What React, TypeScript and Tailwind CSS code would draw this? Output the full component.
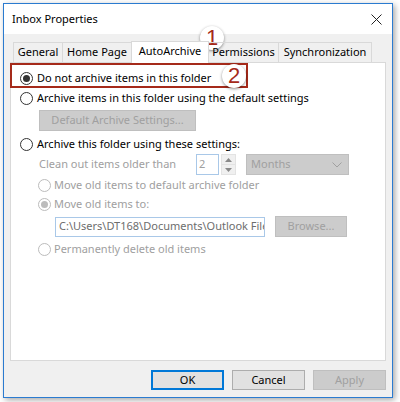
import React from "react";

type RadioProps = {
  checked?: boolean;
  disabled?: boolean;
};

function Radio({ checked = false, disabled = false }: RadioProps) {
  return (
    <span
      className={
        "flex h-[13px] w-[13px] shrink-0 items-center justify-center rounded-full border bg-white " +
        (disabled ? "border-[#bcbcbc]" : "border-[#333333]")
      }
    >
      {checked && (
        <span
          className={
            "h-[7px] w-[7px] rounded-full " + (disabled ? "bg-[#bcbcbc]" : "bg-[#333333]")
          }
        />
      )}
    </span>
  );
}

function Badge({ n }: { n: string }) {
  return (
    <span
      className="flex h-[24px] w-[24px] items-center justify-center rounded-full bg-white text-[22px] leading-none text-[#a52a1a] shadow-[0_1px_3px_rgba(0,0,0,0.45)]"
      style={{ fontFamily: '"Liberation Sans", Arial, sans-serif' }}
    >
      {n}
    </span>
  );
}

const tabs = [
  { label: "General", w: "w-[50px]" },
  { label: "Home Page", w: "w-[70px]" },
];
const tabsRight = [
  { label: "Permissions", w: "w-[71px]" },
  { label: "Synchronization", w: "w-[94px]" },
];

export default function App() {
  return (
    <div
      className="relative h-[402px] w-[400px] bg-white pl-[3px] pt-[3px] text-[11px] text-black"
      style={{ fontFamily: '"Noto Sans", "Liberation Sans", sans-serif' }}
    >
      <div className="flex h-[395px] w-[390px] flex-col border border-[#2b7bd0] bg-[#f0f0f0] shadow-[2px_2px_6px_rgba(0,0,0,0.35)]">
        {/* title bar */}
        <div className="flex h-[30px] shrink-0 items-center justify-between bg-white pl-[8px] pr-[9px]">
          <span>Inbox Properties</span>
          <svg width="11" height="11" viewBox="0 0 11 11" className="mr-[1px]">
            <path d="M0.5 0.5L10.5 10.5M10.5 0.5L0.5 10.5" stroke="#222" strokeWidth="1" />
          </svg>
        </div>

        <div className="flex flex-1 flex-col px-[6px] pt-[6px]">
          {/* tabs */}
          <div className="relative z-10 flex h-[22px] items-end pl-[3px]">
            {tabs.map((t, i) => (
              <div
                key={t.label}
                className={
                  "flex h-[20px] items-center justify-center border border-b-0 border-[#d9d9d9] " +
                  (i > 0 ? "-ml-px " : "") +
                  t.w
                }
              >
                {t.label}
              </div>
            ))}
            <div className="-mb-px -ml-px flex h-[22px] w-[78px] items-center justify-center border border-b-0 border-[#d9d9d9] bg-white pb-[2px]">
              AutoArchive
            </div>
            {tabsRight.map((t) => (
              <div
                key={t.label}
                className={
                  "-ml-px flex h-[20px] items-center justify-center border border-b-0 border-[#d9d9d9] " +
                  t.w
                }
              >
                {t.label}
              </div>
            ))}
          </div>

          {/* panel */}
          <div className="flex h-[299px] flex-col border border-[#d9d9d9] bg-white pl-[9px] pt-[5px]">
            <div className="flex h-[20px] items-center gap-[4px]">
              <Radio checked />
              <span>Do not archive items in this folder</span>
            </div>
            <div className="flex h-[20px] items-center gap-[4px]">
              <Radio />
              <span>Archive items in this folder using the default settings</span>
            </div>
            <div className="ml-[19px] mt-[2px] flex h-[21px] w-[157px] items-center justify-center border border-[#bfbfbf] bg-[#cccccc] text-[#a0a0a0]">
              Default Archive Settings...
            </div>
            <div className="mt-[3px] flex h-[20px] items-center gap-[4px]">
              <Radio />
              <span>Archive this folder using these settings:</span>
            </div>
            <div className="flex h-[21px] items-center pl-[19px] text-[#a0a0a0]">
              <span className="w-[157px]">Clean out items older than</span>
              <div className="flex h-[21px] w-[23px] items-center border border-[#a9c8e8] bg-white pl-[2px] text-[#a0a0a0]">
                2
              </div>
              <div className="ml-[2px] flex h-[21px] w-[15px] flex-col border border-[#e3e3e3] bg-[#f0f0f0]">
                <div className="flex flex-1 items-center justify-center border-b border-[#e3e3e3]">
                  <svg width="7" height="4" viewBox="0 0 7 4">
                    <path d="M0 4L3.5 0L7 4Z" fill="#8a8a8a" />
                  </svg>
                </div>
                <div className="flex flex-1 items-center justify-center">
                  <svg width="7" height="4" viewBox="0 0 7 4">
                    <path d="M0 0L3.5 4L7 0Z" fill="#8a8a8a" />
                  </svg>
                </div>
              </div>
              <div className="ml-[10px] flex h-[21px] w-[103px] items-center justify-between border border-[#bfbfbf] bg-[#cccccc] pl-[4px] pr-[6px] text-[#a0a0a0]">
                <span>Months</span>
                <svg width="10" height="6" viewBox="0 0 10 6">
                  <path d="M0.5 0.5L5 5L9.5 0.5" stroke="#a0a0a0" fill="none" />
                </svg>
              </div>
            </div>
            <div className="mt-[1px] flex h-[19px] items-center gap-[3px] pl-[18px] text-[#a0a0a0]">
              <Radio disabled />
              <span>Move old items to default archive folder</span>
            </div>
            <div className="flex h-[19px] items-center gap-[3px] pl-[18px] text-[#a0a0a0]">
              <Radio disabled checked />
              <span>Move old items to:</span>
            </div>
            <div className="mt-[2px] flex h-[21px] items-center pl-[35px]">
              <div className="h-[20px] w-[210px] overflow-hidden border border-[#a9c8e8] bg-white">
                <div className="flex h-full w-[400px] items-center pl-[3px] text-[#6d6d6d]">
                  C:\Users\DT168\Documents\Outlook Files
                </div>
              </div>
              <div className="ml-[10px] flex h-[21px] w-[72px] items-center justify-center border border-[#bfbfbf] bg-[#cccccc] text-[#a0a0a0]">
                Browse...
              </div>
            </div>
            <div className="mt-[2px] flex h-[20px] items-center gap-[3px] pl-[18px] text-[#a0a0a0]">
              <Radio disabled />
              <span>Permanently delete old items</span>
            </div>
          </div>

          {/* buttons */}
          <div className="mt-[9px] flex justify-end gap-[8px]">
            <div className="flex h-[20px] w-[73px] items-center justify-center border-2 border-[#0078d7] bg-[#e1e1e1]">
              OK
            </div>
            <div className="flex h-[20px] w-[73px] items-center justify-center border border-[#adadad] bg-[#e1e1e1]">
              Cancel
            </div>
            <div className="flex h-[20px] w-[73px] items-center justify-center border border-[#bfbfbf] bg-[#cccccc] text-[#a0a0a0]">
              Apply
            </div>
          </div>
        </div>
      </div>

      {/* annotations */}
      <div className="absolute left-[10px] top-[63px] h-[25px] w-[238px] border-2 border-[#a52a1a]" />
      <div className="absolute left-[222px] top-[64px]">
        <Badge n="2" />
      </div>
      <div className="absolute left-[200px] top-[26px]">
        <Badge n="1" />
      </div>
    </div>
  );
}
